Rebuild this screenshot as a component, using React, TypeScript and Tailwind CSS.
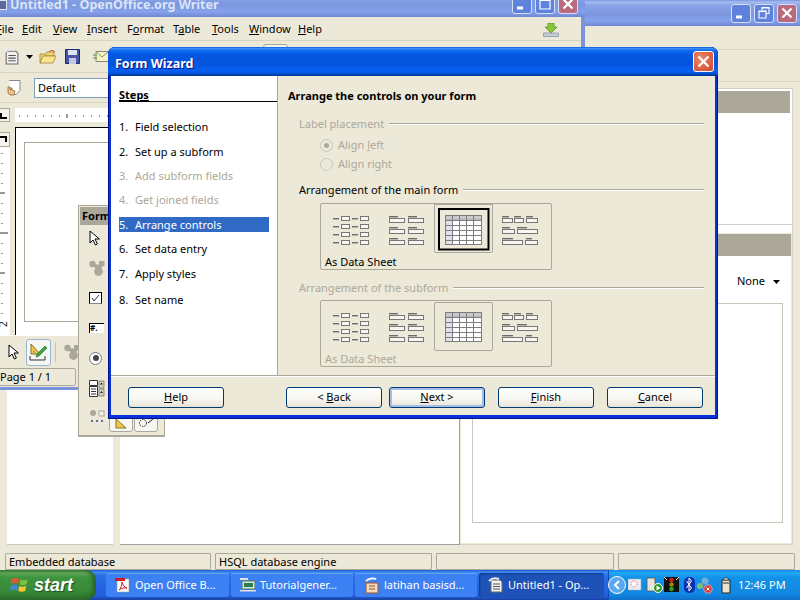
import type { ReactNode } from "react";

const titleGradient =
  "bg-[linear-gradient(180deg,#0a5ae0_0%,#3a8cf6_5%,#0f6cf0_12%,#0458e2_25%,#0453de_60%,#0760f0_80%,#0458e0_90%,#0040ab_96%,#003092_100%)]";
const inactiveGradient =
  "bg-[linear-gradient(180deg,#7a96df_0%,#a6bcf0_8%,#8aa3e6_20%,#7c97e0_55%,#86a2ec_80%,#6f87d0_100%)]";

const WinButton = ({ kind, faded }: { kind: "min" | "max" | "restore" | "close"; faded?: boolean }) => {
  const bg =
    kind === "close"
      ? faded
        ? "bg-[#b96a7c]"
        : "bg-[#d8502f]"
      : "bg-[#5f83dd]";
  return (
    <div className={`w-[20px] h-[19px] rounded-[3px] border border-[#d6e0f8] flex items-center justify-center ${bg}`}>
      <svg width="14" height="14" viewBox="0 0 14 14" fill="none" stroke="#fff">
        {kind === "close" && <path d="M2.5 2.5l9 9M11.5 2.5l-9 9" strokeWidth="2.2" />}
        {kind === "min" && <path d="M2 11h6" strokeWidth="3" />}
        {kind === "max" && <path d="M2 3.5h10v8.5H2zM2 3h10" strokeWidth="1.2" />}
        {kind === "restore" && <path d="M5 4V1.5h7v6H9.5M2 5h7v7H2zM2 5.5h7M5 2h7" strokeWidth="1.1" />}
      </svg>
    </div>
  );
};

const LayoutIcon = ({ kind, x0, w, selected }: { kind: number; x0: number; w: number; selected?: boolean }) => {
  const lab = (x: number, y: number, lw: number) => <rect key={`l${x}-${y}`} x={x} y={y} width={lw} height="1.4" fill="#6c6c6c" />;
  const box = (x: number, y: number, bw: number) => (
    <rect key={`b${x}-${y}`} x={x + 0.5} y={y + 0.5} width={bw} height="4" fill="#f6f5f0" stroke="#777" strokeWidth="1" />
  );
  return (
    <svg width={w} height={48} viewBox={`${x0} 204 ${w} 48`} className="shrink-0">
      {selected && <rect x="440" y="209" width="49.5" height="40.5" fill="none" stroke="#000" strokeWidth="2" />}
      {kind === 0 &&
        [216, 224, 232, 240].map((y) => (
          <g key={y}>
            {lab(333, y + 2, 6)}
            {box(341, y, 8)}
            {lab(352, y + 2, 6)}
            {box(360, y, 8)}
          </g>
        ))}
      {kind === 1 &&
        [218, 229, 240].map((y) => (
          <g key={y}>
            {lab(389, y - 2, 9)}
            {box(389, y, 15)}
            {lab(408, y - 2, 9)}
            {box(408, y, 15)}
          </g>
        ))}
      {kind === 2 && (
        <g stroke="#7d7d7d" strokeWidth="1">
          <rect x="446.5" y="215.5" width="36" height="29" fill="#fff" />
          <rect x="446.5" y="215.5" width="7" height="29" fill="#dfe0ec" />
          <rect x="446.5" y="215.5" width="36" height="4.8" fill="#c8c8cc" />
          <path d="M453.5 215v29M460.5 215v29M467.5 215v29M474.5 215v29M446 220.5h36M446 225.5h36M446 230.5h36M446 235.5h36M446 240.5h36" fill="none" />
        </g>
      )}
      {kind === 3 && (
        <g>
          {lab(502, 216, 7)}
          {lab(514, 216, 7)}
          {lab(526, 216, 7)}
          {box(502, 218, 10)}
          {box(514, 218, 9)}
          {box(526, 218, 11)}
          {lab(502, 227, 8)}
          {lab(517, 227, 10)}
          {box(502, 229, 12)}
          {box(517, 229, 20)}
          {lab(502, 238, 11)}
          {lab(526, 238, 6)}
          {box(502, 240, 20)}
          {box(525, 240, 12)}
        </g>
      )}
    </svg>
  );
};

const Arrangement = ({ disabled }: { disabled?: boolean }) => (
  <div className="ml-[32px] w-[232px] h-[67px] border border-[#aca899] rounded-[2px] flex flex-col">
    <div className="flex h-[49px] -mt-px">
      <div className="w-[57px] pt-px"><LayoutIcon kind={0} x0={321} w={57} /></div>
      <div className="w-[57px] pt-px"><LayoutIcon kind={1} x0={378} w={57} /></div>
      <div className="relative w-[59px] pt-px pl-px -ml-px">
        <LayoutIcon kind={2} x0={436} w={57} selected={!disabled} />
        <div className={`absolute inset-x-0 border border-[#aca899] rounded-[2px] ${disabled ? "top-[2px] h-[49px]" : "top-0 h-[50px] border-t-2"}`} />
      </div>
      <div className="w-[57px] pt-px"><LayoutIcon kind={3} x0={493} w={57} /></div>
    </div>
    <div className={`pl-[4px] text-[11px] leading-[15px] mt-[2px] ${disabled ? "text-[#aca899]" : "text-black"}`}>As Data Sheet</div>
  </div>
);

const GroupLabel = ({ children, disabled }: { children: ReactNode; disabled?: boolean }) => (
  <div className="ml-[11px] h-[15px] flex items-center gap-[5px]">
    <span className={`text-[11px] leading-[15px] whitespace-nowrap ${disabled ? "text-[#aca899]" : "text-black"}`}>{children}</span>
    <div className="flex-1 h-[2px] bg-[#aca899] border-b border-white" />
  </div>
);

const Radio = ({ label, checked }: { label: ReactNode; checked?: boolean }) => (
  <div className="ml-[32px] h-[15px] flex items-center gap-[5px] text-[11px] text-[#aca899]">
    <span className="w-[13px] h-[13px] rounded-full border border-[#c9c7ba] flex items-center justify-center">
      {checked && <span className="w-[5px] h-[5px] rounded-full bg-[#aca899]" />}
    </span>
    {label}
  </div>
);

const DlgButton = ({ children, primary, className }: { children: ReactNode; primary?: boolean; className?: string }) => (
  <div
    className={`w-[96px] h-[21px] rounded-[3px] border border-[#003c74] flex items-center justify-center text-[11px] text-black bg-[linear-gradient(180deg,#ffffff_0%,#f6f5ef_60%,#e6e3d6_100%)] ${
      primary ? "shadow-[inset_0_0_0_2px_#a6bee6]" : ""
    } ${className ?? ""}`}
  >
    {children}
  </div>
);

const steps = [
  { n: "1.", t: "Field selection", cls: "mt-[17px]" },
  { n: "2.", t: "Set up a subform", cls: "mt-[10px]" },
  { n: "3.", t: "Add subform fields", cls: "mt-[9px] text-[#aca899]" },
  { n: "4.", t: "Get joined fields", cls: "mt-[9px] text-[#aca899]" },
  { n: "5.", t: "Arrange controls", cls: "mt-[10px] bg-[#316ac5] text-white" },
  { n: "6.", t: "Set data entry", cls: "mt-[9px]" },
  { n: "7.", t: "Apply styles", cls: "mt-[10px]" },
  { n: "8.", t: "Set name", cls: "mt-[11px]" },
];

const FormWizard = () => (
  <div className="absolute left-[108px] top-[47px] w-[610px] h-[372px] rounded-t-[7px] bg-[#0831d9] shadow-[inset_0_0_0_1px_#00138c] flex flex-col overflow-hidden">
    <div className={`h-[29px] shrink-0 flex items-center justify-between pl-[7px] pr-[4px] ${titleGradient}`}>
      <span className="mt-[6px] font-['Noto_Sans',sans-serif] font-bold text-[12.5px] text-white [text-shadow:1px_1px_#0f1089]">Form Wizard</span>
      <div className="w-[21px] h-[21px] rounded-[3px] border border-white bg-[radial-gradient(circle_at_35%_35%,#e88a6a,#d2452a)] flex items-center justify-center">
        <svg width="13" height="13" viewBox="0 0 13 13" fill="none" stroke="#fff" strokeWidth="2.2">
          <path d="M1.5 1.5l10 10M11.5 1.5l-10 10" />
        </svg>
      </div>
    </div>
    <div className="mx-[3px] h-[339px] bg-[#ece9d8] flex flex-col">
      <div className="h-[299px] flex">
        <div className="w-[167px] shrink-0 bg-white border-r border-[#aca899] pl-[8px] text-[11px] text-black">
          <div className="h-[26px] pt-[12px] border-b border-black font-bold underline leading-[14px]">Steps</div>
          {steps.map((s) => (
            <div key={s.n} className={`w-[150px] h-[15px] leading-[15px] flex ${s.cls}`}>
              <span className="w-[16px]">{s.n}</span>
              <span>{s.t}</span>
            </div>
          ))}
        </div>
        <div className="flex-1 pl-[10px] pr-[11px] pt-[12px] flex flex-col text-[11px]">
          <div className="h-[15px] leading-[15px] font-bold text-black">Arrange the controls on your form</div>
          <div className="mt-[13px]"><GroupLabel disabled>Label placement</GroupLabel></div>
          <div className="mt-[7px]"><Radio checked label={<span>Align <u>l</u>eft</span>} /></div>
          <div className="mt-[4px]"><Radio label={<span>Ali<u>g</u>n right</span>} /></div>
          <div className="mt-[10px]"><GroupLabel>Arrangement of the main form</GroupLabel></div>
          <div className="mt-[6px]"><Arrangement /></div>
          <div className="mt-[10px]"><GroupLabel disabled>Arrangement of the subform</GroupLabel></div>
          <div className="mt-[5px]"><Arrangement disabled /></div>
        </div>
      </div>
      <div className="flex-1 border-t border-[#aca899] shadow-[inset_0_1px_#fff] pl-[17px] pt-[11px] flex">
        <DlgButton><u>H</u>elp</DlgButton>
        <DlgButton className="ml-[62px]">&lt;&nbsp;<u>B</u>ack</DlgButton>
        <DlgButton primary className="ml-[7px]"><u>N</u>ext &gt;</DlgButton>
        <DlgButton className="ml-[13px]"><u>F</u>inish</DlgButton>
        <DlgButton className="ml-[13px]"><u>C</u>ancel</DlgButton>
      </div>
    </div>
  </div>
);

const WriterDocIcon = ({ size = 16 }: { size?: number }) => (
  <svg width={size} height={size} viewBox="0 0 16 16">
    <path d="M3 3h9l2 2v10H3z" fill="#f2f2f2" stroke="#6a6a6a" />
    <path d="M5 7h7M5 9.5h7M5 12h7" stroke="#555" />
    <path d="M1 4c3-3 7-3 10-2" fill="none" stroke="#e8e8e8" strokeWidth="2" />
  </svg>
);

const Pointer = () => (
  <svg width="12" height="16" viewBox="0 0 12 16">
    <path d="M1 1v12l3-3 2.4 5 2-1-2.4-5h4.4z" fill="#fff" stroke="#000" />
  </svg>
);

const Shapes = ({ w = 16 }: { w?: number }) => (
  <svg width={w} height="16" viewBox="0 0 16 16" fill="#aca899">
    <circle cx="3.5" cy="4" r="3.2" />
    <rect x="10" y="1" width="5.5" height="5" />
    <circle cx="9.5" cy="11.5" r="4.4" />
    <path d="M4 4l6 7 3-6" stroke="#aca899" strokeWidth="2" />
  </svg>
);

const DesignIcon = () => (
  <svg width="19" height="18" viewBox="0 0 19 18">
    <path d="M2 1l9 10H2z" fill="#f0c94a" stroke="#8a7420" />
    <path d="M5 8l2 3H5z" fill="#fff" stroke="#8a7420" strokeWidth="0.6" />
    <path d="M8 11l8-8 2 2-8 8-3 1z" fill="#3fa33f" stroke="#1f6d1f" strokeWidth="0.6" />
    <path d="M1 13v4h15v-4" fill="none" stroke="#333" />
  </svg>
);

const WriterWindow = () => (
  <div className="absolute left-[-8px] top-[-9px] w-[593px] h-[399px] bg-[#ece9d8] border-x-4 border-b-[3px] border-[#7a93dc] flex flex-col">
    <div className={`h-[26px] -mx-[4px] shrink-0 flex items-center justify-between pl-[5px] pr-[7px] ${inactiveGradient}`}>
      <div className="flex items-center gap-[2px] mt-[3px]">
        <span className="w-[10px] h-[10px] bg-[#5a6a9a] border border-[#dfe6f7]" />
        <span className="font-['Noto_Sans',sans-serif] font-bold text-[12.6px] text-[#dbe5fa] whitespace-nowrap ml-[1px]">Untitled1 - OpenOffice.org Writer</span>
      </div>
      <div className="flex gap-[3px]">
        <WinButton kind="min" />
        <WinButton kind="max" />
        <WinButton kind="close" faded />
      </div>
    </div>
    <div className="h-[24px] shrink-0 flex items-center pt-[2px] text-[11px] text-black pr-[22px] border-b border-[#d8d4c0]">
      <span className="w-[26px]"><u>F</u>ile</span>
      <span className="w-[31px]"><u>E</u>dit</span>
      <span className="w-[34px]"><u>V</u>iew</span>
      <span className="w-[40px]"><u>I</u>nsert</span>
      <span className="w-[46px]">F<u>o</u>rmat</span>
      <span className="w-[39px]">T<u>a</u>ble</span>
      <span className="w-[37px]"><u>T</u>ools</span>
      <span className="w-[49px]"><u>W</u>indow</span>
      <span><u>H</u>elp</span>
      <svg width="16" height="14" viewBox="0 0 16 14" className="ml-auto">
        <path d="M5 0h6v4h3l-6 6-6-6h3z" fill="#8cc63f" stroke="#5c8f1e" strokeWidth="0.8" />
        <path d="M0.5 10h15v3.5H0.5z" fill="#c5ccd6" stroke="#8a97a8" strokeWidth="0.8" />
      </svg>
    </div>
    <div className="h-[32px] shrink-0 flex items-center pl-[7px] border-b border-[#d8d4c0]">
      <WriterDocIcon size={17} />
      <svg width="7" height="4" viewBox="0 0 7 4" className="ml-[6px] mr-[6px]"><path d="M0 0h7L3.5 4z" fill="#000" /></svg>
      <svg width="18" height="15" viewBox="0 0 18 15" className="mr-[8px]">
        <path d="M1 5h6l1-2h7v4H5l-3 7H1z" fill="#f0d878" stroke="#9a7a20" strokeWidth="0.7" />
        <path d="M4 7h13l-3 7H1z" fill="#f7e58f" stroke="#9a7a20" strokeWidth="0.7" />
        <path d="M10 3c2-2 4-2 6 0" fill="none" stroke="#d0392b" />
      </svg>
      <svg width="15" height="15" viewBox="0 0 15 15" className="mr-[13px]">
        <path d="M.5.5h14v14H.5z" fill="#4a55a8" stroke="#1d2a78" />
        <path d="M3 1h9v5H3z" fill="#dfe3f2" />
        <path d="M4 9h7v6H4z" fill="#c3c8dc" />
      </svg>
      <svg width="16" height="11" viewBox="0 0 16 11">
        <path d="M3 .5h12.5v10H3z" fill="#f7f1c8" stroke="#8b8b6a" />
        <path d="M3 .5l6 5.5 6.5-5.5" fill="none" stroke="#8b8b6a" />
        <path d="M0 4h4M0 7h4" stroke="#3aa23a" />
      </svg>
      <div className="ml-[154px] w-[25px] h-[25px] rounded-[3px] border border-[#aca899] bg-[#f4f3ee]" />
    </div>
    <div className="h-[30px] shrink-0 flex items-center pl-[9px] border-b border-[#d8d4c0]">
      <svg width="16" height="16" viewBox="0 0 16 16">
        <path d="M4 .5h11v10l-4 4H7" fill="#fff" stroke="#888" />
        <path d="M3 7V13l2 2h4l1-4-3-1V8H6v2H5V7z" fill="#f0c089" stroke="#8a5a20" strokeWidth="0.7" />
      </svg>
      <div className="ml-[13px] w-[130px] h-[20px] bg-white border border-[#7f9db9] pl-[3px] text-[11px] leading-[18px] text-black">Default</div>
    </div>
    <div className="h-[24px] shrink-0 flex pt-[5px]">
      <div className="w-[14px] h-[14px] bg-[#f4f3ee] border border-[#aca899] flex items-end justify-center pb-[2px]">
        <div className="w-[7px] h-[6px] border-l-2 border-b-2 border-black" />
      </div>
      <svg width="110" height="14" viewBox="0 0 110 14" className="ml-[5px] bg-white">
        <path d="M4 8h1M12 8h1M20 8h1M28 8h1M36 8h1M44 8h1M52 6v4M60 8h1M68 8h1M76 8h1M84 8h1M92 8h1M100 8h1" stroke="#333" />
      </svg>
    </div>
    <div className="flex-1 flex min-h-0">
      <div className="w-[14px] flex flex-col">
        <div className="h-[5px]" />
        <div className="h-[15px] bg-[#f4f3ee] border border-[#aca899] flex items-start justify-center pt-[3px]">
          <div className="w-[7px] h-[6px] border-r-2 border-t-2 border-black" />
        </div>
        <svg width="14" height="188" viewBox="0 0 14 188" className="bg-white">
          <path d="M6 6v1M6 16v1M6 26v1M6 36v1M4 46h5M6 56v1M6 66v1M6 76v1M2 86h10M6 96v1M6 106v1M6 116v1M4 126h5M6 136v1M6 146v1M6 156v1M6 166v1" stroke="#333" />
          <text x="3" y="180" fontSize="10" fill="#222" transform="rotate(-90 7 176)">2</text>
        </svg>
      </div>
      <div className="w-[5px]" />
      <div className="flex-1 bg-white border-l border-t border-black pl-[8px] pt-[14px] pb-[13px]">
        <div className="w-[300px] h-[180px] border border-[#aca899]" />
      </div>
    </div>
    <div className="h-[33px] shrink-0 flex items-center pl-[12px] border-t border-[#fff]">
      <Pointer />
      <div className="ml-[6px] w-[25px] h-[27px] rounded-[3px] border border-[#9ab4d4] bg-[#f6f6f2] flex items-center justify-center">
        <DesignIcon />
      </div>
      <div className="ml-[4px] w-px h-[20px] bg-[#c5c2b0]" />
      <div className="ml-[8px]"><Shapes /></div>
    </div>
    <div className="h-[19px] shrink-0 flex">
      <div className="w-[80px] h-[18px] border border-[#aca899] rounded-[2px] pl-[3px] text-[11px] leading-[16px] text-black whitespace-nowrap">Page 1 / 1</div>
    </div>
  </div>
);

const FormToolbar = () => (
  <div className="absolute left-[78px] top-[205px] w-[87px] h-[232px] bg-[#ece9d8] border border-[#aca899] border-b-2 flex flex-col">
    <div className="h-[18px] mt-px mx-px bg-[#aca899] pl-[2px] text-[11px] leading-[18px] font-bold text-black shrink-0 overflow-hidden whitespace-nowrap">Form Controls</div>
    <div className="mt-[3px] flex flex-col gap-[10px] pl-[10px] text-black shrink-0">
      <div className="h-[20px] flex items-center"><Pointer /></div>
      <div className="h-[20px] flex items-center"><Shapes /></div>
      <div className="h-[20px] flex items-center">
        <div className="w-[13px] h-[12px] border border-black border-b-[#888] bg-white flex items-center justify-center">
          <svg width="9" height="8" viewBox="0 0 9 8"><path d="M1 4l2 3 5-6" fill="none" stroke="#333" /></svg>
        </div>
      </div>
      <div className="h-[20px] flex items-center">
        <div className="w-[15px] h-[10px] border-l border-t border-black bg-white text-[8px] leading-[8px] font-bold">#.</div>
      </div>
      <div className="h-[20px] flex items-center">
        <div className="w-[13px] h-[13px] rounded-full border border-[#777] bg-white flex items-center justify-center">
          <div className="w-[6px] h-[6px] rounded-full bg-[#444]" />
        </div>
      </div>
      <div className="h-[20px] flex items-center">
        <svg width="16" height="17" viewBox="0 0 16 17">
          <path d="M.5 .5h8v5h-8zM.5 6.5h8v10h-8z" fill="#fff" stroke="#333" />
          <path d="M2 9h5M2 11.500h5M2 14h5" stroke="#333" />
          <path d="M10 1h5v7h-5zM10 9h5v7h-5z" fill="#d5d2c2" stroke="#555" strokeWidth="0.6" />
          <path d="M12.500 2.500l1.500 2h-3zM11 13l1.500-2 1.500 2z" fill="#222" />
        </svg>
      </div>
      <div className="h-[20px] flex items-center">
        <svg width="26" height="20" viewBox="0 0 26 20">
          <circle cx="4" cy="5" r="3" fill="#aca899" />
          <rect x="10" y="3" width="5" height="5" fill="#f4f3ee" stroke="#aca899" />
          <path d="M2 13h2M7 13h2M12 13h2" stroke="#3a3a8a" strokeWidth="1.500" />
        </svg>
      </div>
    </div>
    <div className="absolute left-[30px] top-[204px] flex gap-px">
      <div className="w-[24px] h-[22px] rounded-[3px] border border-[#aca899] bg-[#f6f6f2] flex items-end justify-center pb-[2px]">
        <svg width="14" height="10" viewBox="0 0 14 10"><path d="M2 0l10 9H2z" fill="#f0c94a" stroke="#8a7420" /></svg>
      </div>
      <div className="w-[24px] h-[22px] rounded-[3px] border border-[#aca899] bg-[#f6f6f2] flex items-end justify-center pb-[3px]">
        <svg width="16" height="10" viewBox="0 0 16 10" fill="none" stroke="#222"><circle cx="5" cy="5" r="3.500" strokeDasharray="1.500 1" /><path d="M10 5l5-4" /></svg>
      </div>
    </div>
  </div>
);

const BackWindow = () => (
  <div className="flex-1 flex flex-col min-h-0">
    <div className={`h-[26px] shrink-0 flex items-center justify-end pr-[3px] ${inactiveGradient}`}>
      <div className="flex gap-[3px]">
        <WinButton kind="min" />
        <WinButton kind="restore" />
        <WinButton kind="close" faded />
      </div>
    </div>
    <div className="h-[24px] shrink-0 border-b border-[#d8d4c0]" />
    <div className="h-[32px] shrink-0 border-b border-[#d8d4c0]" />
    <div className="h-[463px] shrink-0 pt-[6px] flex pl-[7px] pr-[7px]">
      <div className="w-[106px] bg-white border-b border-[#c9c7ba]" />
      <div className="ml-[7px] w-[340px] bg-white border-r border-b border-[#a0a0a0]" />
      <div className="w-[333px] bg-white border-b border-r border-[#d4d0c8] flex flex-col">
        <div className="h-[137px] p-[2px] border border-[#d4d0c8] border-r-0">
          <div className="h-[22px] bg-[#aca899]" />
        </div>
        <div className="mt-[8px] flex-1 bg-[#ece9d8] p-px">
          <div className="h-full bg-white flex flex-col">
            <div className="h-[22px] bg-[#aca899]" />
            <div className="h-[47px] pt-[4px] flex items-center justify-end gap-[8px] pr-[11px] text-[11px] text-black">
              None
              <svg width="7" height="4" viewBox="0 0 7 4"><path d="M0 0h7L3.500 4z" fill="#000" /></svg>
            </div>
            <div className="ml-[11px] w-[311px] h-[220px] border border-[#c9c7ba]" />
          </div>
        </div>
      </div>
    </div>
    <div className="h-[25px] shrink-0 flex items-center gap-[4px] pl-[5px] pr-[5px] text-[11px] text-black">
      <div className="w-[206px] h-[17px] mt-[7px] border border-[#aca899] rounded-[1px] pl-[3px] leading-[15px]">Embedded database</div>
      <div className="w-[217px] h-[17px] mt-[7px] border border-[#aca899] rounded-[1px] pl-[3px] leading-[15px]">HSQL database engine</div>
      <div className="w-[178px] h-[17px] mt-[7px] border border-[#aca899] rounded-[1px]" />
      <div className="w-[177px] h-[17px] mt-[7px] border border-[#aca899] rounded-[1px]" />
    </div>
  </div>
);

const PdfIcon = () => (
  <svg width="16" height="16" viewBox="0 0 16 16">
    <path d="M2 2h12v13H2z" fill="#fff" stroke="#999" strokeWidth="0.6" />
    <path d="M0 1h10v3H0z" fill="#d21c1c" />
    <path d="M4 13c2-1 3-6 3-8 1 3 2 5 5 6-3-.5-5 0-8 2z" fill="none" stroke="#d21c1c" />
  </svg>
);

const TermIcon = () => (
  <svg width="16" height="14" viewBox="0 0 16 14">
    <path d="M2 3h13v8H2z" fill="#cfe8d8" stroke="#5b7a6a" />
    <path d="M4 5h9v4H4z" fill="#2f7a56" />
    <path d="M0 12h16v1.500H0zM0 0h8v2H0z" fill="#dfe4e0" />
  </svg>
);

const BaseIcon = () => (
  <svg width="16" height="17" viewBox="0 0 16 17">
    <path d="M2 6h12v10H2z" fill="#f1d9c0" stroke="#a1511f" />
    <path d="M5 9h6M5 12h6" stroke="#a1511f" />
    <path d="M2 4c3-3 8-3 10-2" fill="none" stroke="#f2f2f2" strokeWidth="2" />
  </svg>
);

const TaskButton = ({ icon, label, active, className }: { icon: ReactNode; label: string; active?: boolean; className: string }) => (
  <div
    className={`h-[24px] rounded-[3px] flex items-center pl-[9px] gap-[4px] text-[11px] text-white whitespace-nowrap ${
      active ? "bg-[#1e52b7] shadow-[inset_1px_1px_2px_#0f3a8a]" : "bg-[#3c81f3] shadow-[inset_0_1px_#6aa0f7]"
    } ${className}`}
  >
    <span className="w-[16px] flex justify-center shrink-0">{icon}</span>
    {label}
  </div>
);

const Taskbar = () => (
  <div className="h-[30px] shrink-0 flex items-center bg-[linear-gradient(180deg,#1f5bd6_0%,#3f8cf3_8%,#2b6fe5_18%,#2663e0_55%,#2560dc_85%,#1941a5_100%)]">
    <div className="w-[96px] h-full rounded-r-[10px] flex items-center pl-[10px] gap-[5px] bg-[linear-gradient(180deg,#3d8a3d_0%,#60a85c_10%,#3e933e_25%,#378a37_70%,#2b6f2b_100%)] shadow-[inset_-3px_0_4px_#2a5f2a]">
      <svg width="19" height="18" viewBox="0 0 19 18">
        <path d="M2 3c3-1.500 5-1.500 7 0l-1 5c-2-1.500-4-1.500-7 0z" fill="#e2582f" />
        <path d="M10.500 3.500c2 1 4.500 1 7 0l-1 5c-2.500 1-4.500 1-7 0z" fill="#7cc242" />
        <path d="M1 9.500c3-1.500 5-1.500 7 0l-1 5c-2-1.500-4-1.500-7 0z" fill="#3e8ad8" />
        <path d="M9.200 10c2 1 4.500 1 7 0l-1 5c-2.500 1-4.500 1-7 0z" fill="#f7c532" />
      </svg>
      <span className="font-['Liberation_Sans',sans-serif] italic font-bold text-[18px] text-white [text-shadow:1px_1px_1px_#1f4f1f]">start</span>
    </div>
    <div className="ml-[10px] flex gap-[2px]">
      <TaskButton icon={<PdfIcon />} label="Open Office B..." className="w-[123px]" />
      <TaskButton icon={<TermIcon />} label="Tutorialgener..." className="w-[122px]" />
      <TaskButton icon={<BaseIcon />} label="latihan basisd..." className="w-[122px]" />
      <TaskButton icon={<WriterDocIcon />} label="Untitled1 - Op..." active className="w-[125px]" />
    </div>
    <div className="ml-auto w-[192px] h-full flex items-center border-l border-[#0b4fb0] bg-[linear-gradient(180deg,#1388e8_0%,#23a8f5_10%,#1292ea_25%,#1288e2_80%,#0f6fc8_100%)] text-[11px] text-white">
      <div className="w-[18px] h-[18px] -ml-[1px] rounded-full bg-[#5aa8f0] border border-white flex items-center justify-center">
        <svg width="8" height="10" viewBox="0 0 8 10" fill="none" stroke="#fff" strokeWidth="2"><path d="M6 1L2 5l4 4" /></svg>
      </div>
      <svg width="110" height="20" viewBox="0 0 110 20" className="ml-[2px]">
        <g transform="translate(-2 0)">
          <path d="M2 4h13v11H2z" fill="#e8eef5" stroke="#9ab" strokeWidth="0.5" />
          <circle cx="8" cy="9" r="3" fill="#fff" stroke="#d56" strokeDasharray="1 1" />
          <path d="M21 3h8v13h-8z" fill="#e8e4d8" stroke="#555" strokeWidth="0.8" />
          <circle cx="32" cy="13" r="4.500" fill="#2a9a2a" stroke="#fff" />
          <path d="M30.500 10.500l4 2.500-4 2.500z" fill="#fff" />
        </g>
        <g transform="translate(-3 0)">
          <path d="M39 2h15v15H39z" fill="#111" />
          <path d="M39 2l3 3M54 2l-3 3" stroke="#eee" />
          <circle cx="46.500" cy="5" r="2.200" fill="#c22" />
          <circle cx="46.500" cy="9.500" r="2.200" fill="#a80" />
          <circle cx="46.500" cy="14" r="2.200" fill="#2a2" />
        </g>
        <g transform="translate(-5 0)">
          <rect x="61" y="2" width="11" height="16" rx="5" fill="#0a2fb0" />
          <path d="M63.500 6l5 7-2.500 3V3l2.500 3-5 7" fill="none" stroke="#fff" />
        </g>
        <g transform="translate(-8 0)">
          <circle cx="85" cy="6" r="3.500" fill="#6fb0d8" />
          <circle cx="80" cy="11" r="3" fill="#7fc07f" />
          <circle cx="88" cy="14" r="4.200" fill="#d93a3a" stroke="#fff" strokeWidth="0.5" />
          <path d="M86.500 12.500l3 3M89.500 12.500l-3 3" stroke="#fff" />
        </g>
        <g transform="translate(-5 0)">
          <path d="M99 5h8v13h-8z" fill="#e8e4d0" stroke="#222" />
          <path d="M101 3h4v2h-4z" fill="#eee" stroke="#222" strokeWidth="0.6" />
          <path d="M100 8h6" stroke="#888" strokeWidth="2" />
        </g>
      </svg>
      <span className="text-[11px] whitespace-nowrap">12:46 PM</span>
    </div>
  </div>
);

export default function App() {
  return (
    <div className="relative w-[800px] h-[600px] overflow-hidden bg-[#ece9d8] flex flex-col font-['Noto_Sans','Liberation_Sans',sans-serif]">
      <BackWindow />
      <Taskbar />
      <WriterWindow />
      <FormToolbar />
      <FormWizard />
    </div>
  );
}
